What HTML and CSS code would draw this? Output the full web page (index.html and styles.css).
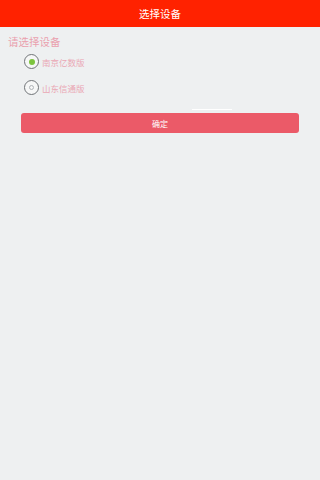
FILE: index.html
```html
<!DOCTYPE html>
<html lang="zh">
<head>
<meta charset="utf-8">
<title>选择设备</title>
<link rel="stylesheet" href="styles.css">
</head>
<body>
<header class="topbar">选择设备</header>
<main class="content">
  <div class="prompt">请选择设备</div>
  <ul class="options">
    <li class="option">
      <span class="radio checked"><span class="dot"></span></span>
      <span class="label">南京亿数版</span>
    </li>
    <li class="option">
      <span class="radio"><span class="ring"></span></span>
      <span class="label">山东信通版</span>
    </li>
  </ul>
  <div class="divider"></div>
  <button class="confirm">确定</button>
</main>
</body>
</html>
```
FILE: styles.css
```css
* { box-sizing: border-box; }
html, body {
  margin: 0;
  padding: 0;
  height: 100%;
}
body {
  background: #eef0f1;
  font-family: "Noto Sans CJK SC", "Noto Sans", sans-serif;
}
.topbar {
  height: 27px;
  background: #ff2200;
  color: #ffffff;
  font-size: 10.5px;
  display: flex;
  align-items: center;
  justify-content: center;
}
.content {
  padding: 8px 21px 0 8px;
}
.prompt {
  font-size: 10.5px;
  line-height: 14px;
  color: #eaa0ae;
}
.options {
  list-style: none;
  margin: 5px 0 0 16px;
  padding: 0;
  display: flex;
  flex-direction: column;
  gap: 11px;
}
.option {
  display: flex;
  align-items: center;
  gap: 3px;
  height: 15px;
}
.radio {
  width: 15px;
  height: 15px;
  border-radius: 50%;
  border: 1.3px solid #707478;
  background: #f6f7f7;
  display: flex;
  align-items: center;
  justify-content: center;
}
.dot {
  width: 6px;
  height: 6px;
  border-radius: 50%;
  background: #7cc43e;
}
.ring {
  width: 5px;
  height: 5px;
  border-radius: 50%;
  border: 1px solid #b0b4b8;
}
.label {
  font-size: 8.5px;
  color: #eaa7b4;
}
.divider {
  margin: 14px 0 0 184px;
  width: 40px;
  height: 1px;
  background: #ffffff;
}
.confirm {
  display: block;
  margin: 3px 0 0 13px;
  width: 278px;
  height: 20px;
  border: none;
  border-radius: 3px;
  background: #eb5a68;
  color: #ffffff;
  font-family: "Noto Sans CJK SC", "Noto Sans", sans-serif;
  font-size: 8px;
  padding: 0;
}
```
